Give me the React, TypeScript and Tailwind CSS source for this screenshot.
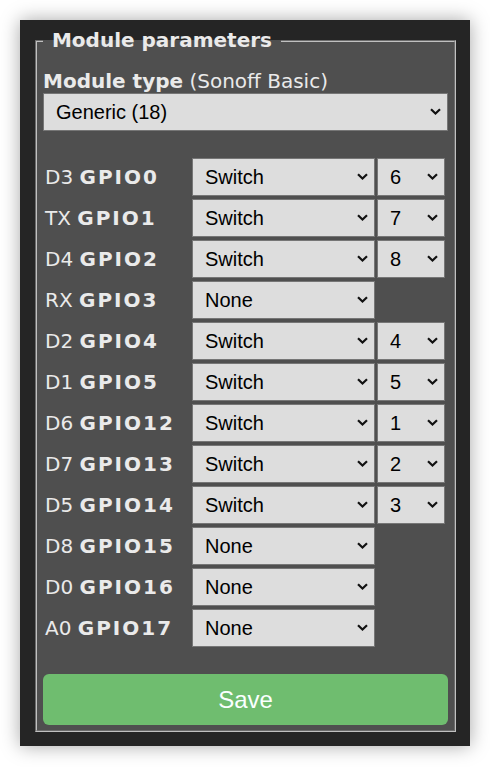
import React from "react";

interface GpioRow {
  pin: string;
  gpio: string;
  func: string;
  index?: string;
}

const ROWS: GpioRow[] = [
  { pin: "D3", gpio: "GPIO0", func: "Switch", index: "6" },
  { pin: "TX", gpio: "GPIO1", func: "Switch", index: "7" },
  { pin: "D4", gpio: "GPIO2", func: "Switch", index: "8" },
  { pin: "RX", gpio: "GPIO3", func: "None" },
  { pin: "D2", gpio: "GPIO4", func: "Switch", index: "4" },
  { pin: "D1", gpio: "GPIO5", func: "Switch", index: "5" },
  { pin: "D6", gpio: "GPIO12", func: "Switch", index: "1" },
  { pin: "D7", gpio: "GPIO13", func: "Switch", index: "2" },
  { pin: "D5", gpio: "GPIO14", func: "Switch", index: "3" },
  { pin: "D8", gpio: "GPIO15", func: "None" },
  { pin: "D0", gpio: "GPIO16", func: "None" },
  { pin: "A0", gpio: "GPIO17", func: "None" },
];

const FUNCS = ["None", "Switch", "Button", "Relay", "Led", "PWM", "Counter"];
const INDEXES = ["1", "2", "3", "4", "5", "6", "7", "8"];

// native select without chrome's arrow, chevron drawn on top
const Select: React.FC<{ value: string; options: string[] }> = ({ value, options }) => (
  <div className="relative h-[38px] w-full">
    <select
      defaultValue={value}
      className="appearance-none h-full w-full bg-[#dddddd] text-black border border-[#767676] pl-[12px] pr-[24px] font-['Liberation_Sans',Arial,sans-serif] text-[20px]"
    >
      {options.map((o) => (
        <option key={o}>{o}</option>
      ))}
    </select>
    <svg
      className="pointer-events-none absolute right-[7px] top-[15px]"
      width="11"
      height="7"
      viewBox="0 0 11 7"
      fill="none"
    >
      <path d="M1 1.2 L5.5 5.5 L10 1.2" stroke="#111" strokeWidth="2.2" />
    </svg>
  </div>
);

const App: React.FC = () => {
  return (
    <div className="min-h-[767px] bg-white p-[20px]">
      <div className="bg-[#252525] pt-[9px] pl-[15px] pr-[14px] pb-[14px] shadow-[0_0_18px_rgba(0,0,0,0.35)] text-[#eaeaea] font-['DejaVu_Sans',Verdana,sans-serif] text-[20px]">
        <fieldset className="bg-[#4f4f4f] border-2 [border-style:groove] border-[#c0c0c0] px-[6px] pt-[6px] pb-[5px]">
          <legend className="px-[2px] font-bold leading-[23px]">&nbsp;Module parameters&nbsp;</legend>

          <div className="mt-[12px] leading-[23px]">
            <b>Module type</b> (Sonoff Basic)
          </div>
          <Select value="Generic (18)" options={["Generic (18)", "Sonoff Basic (1)"]} />

          <div className="mt-[27px] grid grid-cols-[147px_183px_68px] gap-x-[2px] gap-y-[3px]">
            {ROWS.map((r) => (
              <React.Fragment key={r.gpio}>
                <div className="flex items-center pl-[2px] whitespace-nowrap">
                  {r.pin}&nbsp;<b className="tracking-[2px]">{r.gpio}</b>
                </div>
                <Select value={r.func} options={FUNCS} />
                {r.index ? <Select value={r.index} options={INDEXES} /> : <div />}
              </React.Fragment>
            ))}
          </div>

          <button className="mt-[27px] h-[51px] w-full rounded-[6px] bg-[#6fbd6f] text-[#faffff] text-[24px] font-['Liberation_Sans',Arial,sans-serif]">
            Save
          </button>
        </fieldset>
      </div>
    </div>
  );
};

export default App;
